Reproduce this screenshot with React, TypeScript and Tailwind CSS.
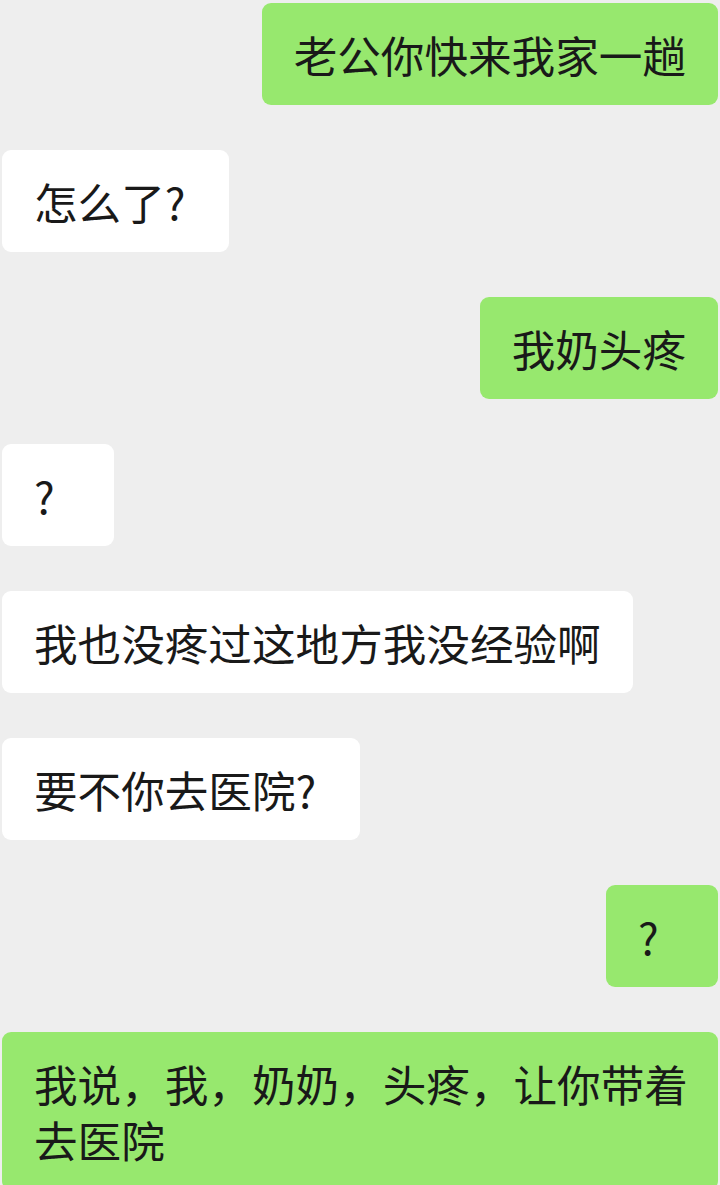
const messages: { me: boolean; text: string; wide?: boolean }[] = [
  { me: true, text: "老公你快来我家一趟" },
  { me: false, text: "怎么了?" },
  { me: true, text: "我奶头疼" },
  { me: false, text: "?" },
  { me: false, text: "我也没疼过这地方我没经验啊" },
  { me: false, text: "要不你去医院?" },
  { me: true, text: "?" },
  { me: true, text: "我说，我，奶奶，头疼，让你带着去医院", wide: true },
]

export default function App() {
  return (
    <div
      className="w-[720px] h-[1185px] overflow-hidden bg-[#eeeeee] px-[2px] pt-[3px] flex flex-col gap-[45px]"
      style={{ fontFamily: '"Noto Sans CJK SC", "Noto Sans", sans-serif' }}
    >
      {messages.map((m, i) => (
        <div key={i} className={`flex ${m.me ? "justify-end" : "justify-start"}`}>
          <div
            className={`min-w-[112px] rounded-[9px] pl-[32px] py-[23px] text-[43.6px] leading-[56px] text-[#191919] ${
              m.me ? "bg-[#97e86e]" : "bg-white"
            } ${m.wide ? "w-full pr-[20px]" : "pr-[32px]"} ${m.text.endsWith("?") && m.text.length > 1 ? "pr-[44px]" : ""}`}
          >
            {m.text}
          </div>
        </div>
      ))}
    </div>
  )
}
